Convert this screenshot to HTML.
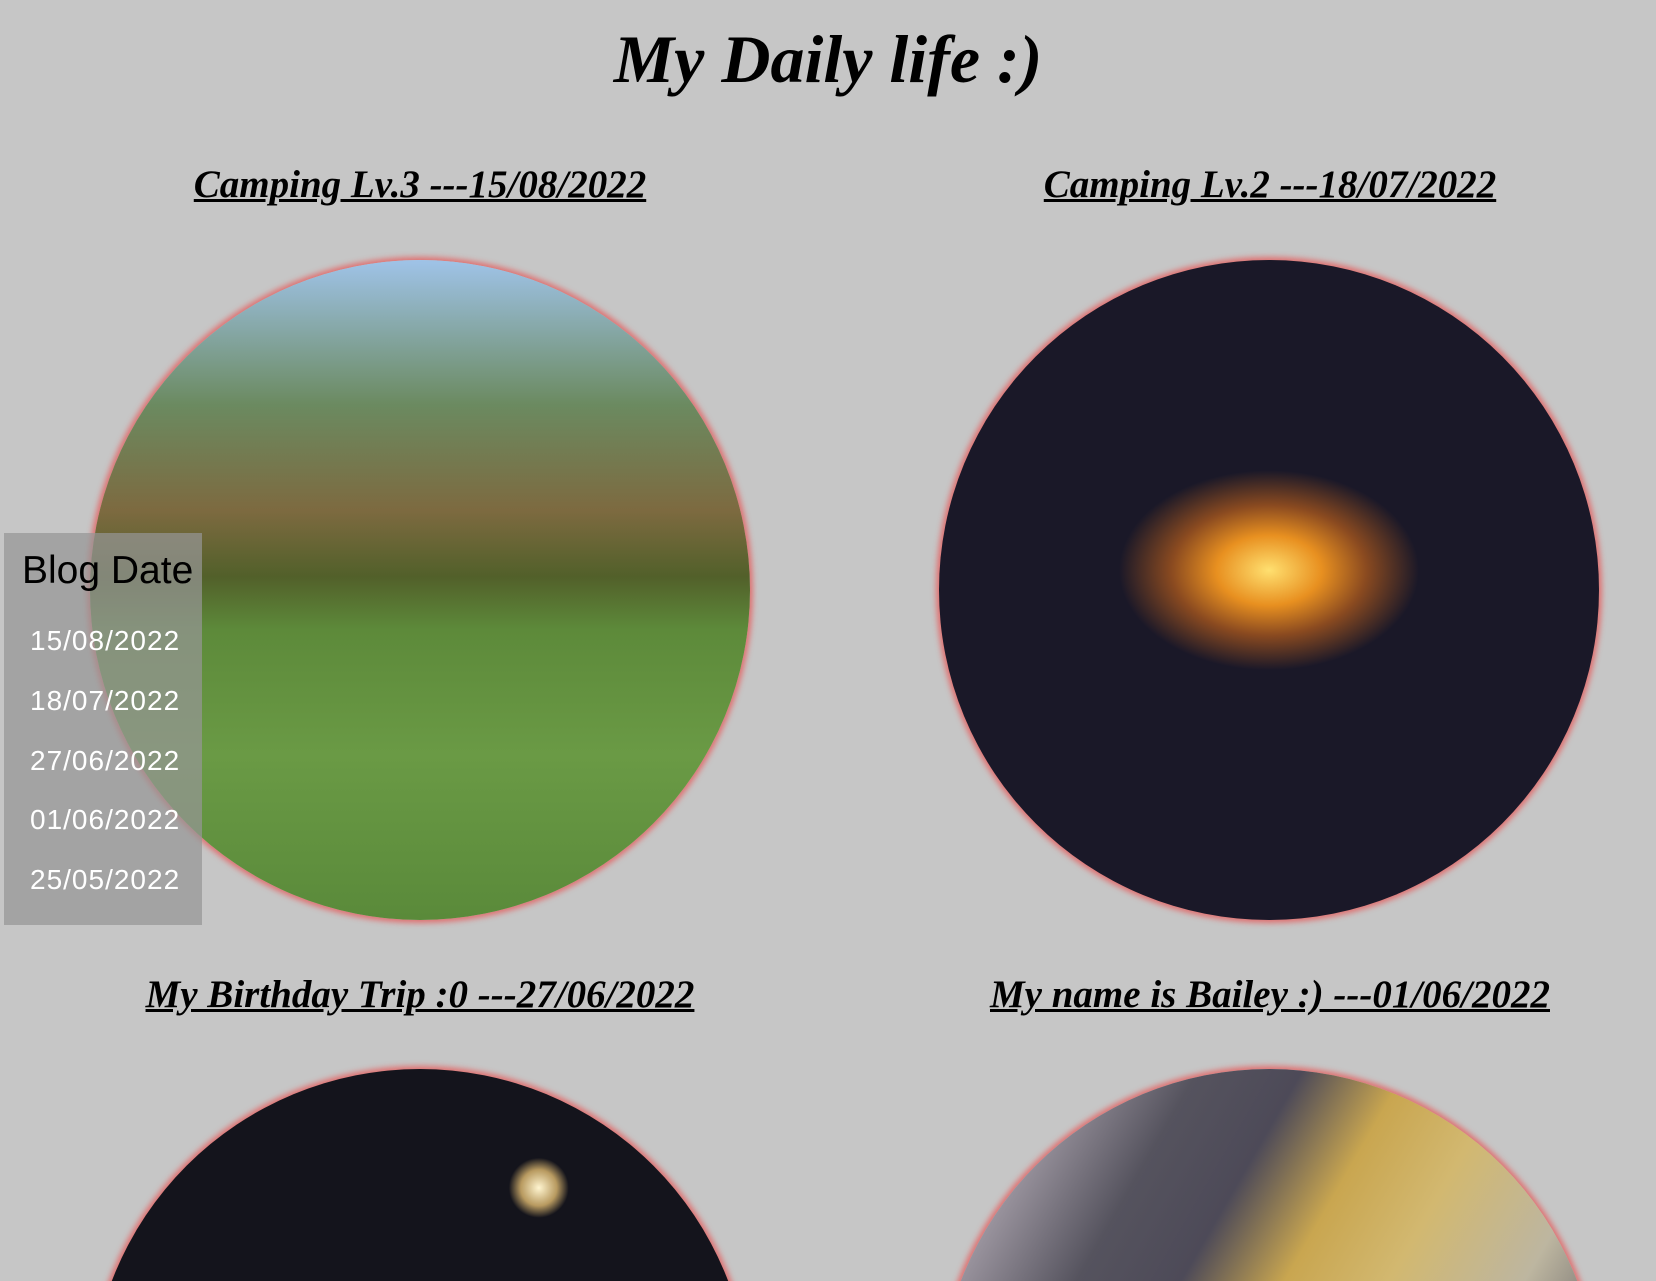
<!DOCTYPE html>
<html><head><meta charset="utf-8"><style>
html,body{margin:0;padding:0;width:1656px;height:1281px;overflow:hidden;}
body{background:#c6c6c6;font-family:"Liberation Serif",serif;}
#w{position:relative;width:1656px;height:1281px;overflow:hidden;background:#c6c6c6;}
h1{position:absolute;top:14px;left:0;width:1656px;margin:0;text-align:center;font-size:68px;font-style:italic;font-weight:bold;color:#000;line-height:90px;}
.h{position:absolute;width:828px;text-align:center;font-size:39px;font-style:italic;font-weight:bold;text-decoration:underline;line-height:46px;margin:0;}
.c{position:absolute;width:660px;height:660px;border-radius:50%;box-shadow:0 0 6px 3px #e07070;}
.side{position:absolute;left:4px;top:533px;width:198px;height:392px;background:rgba(150,150,150,0.72);}
.side .t{position:absolute;left:18px;top:16px;font-family:"Liberation Sans",sans-serif;font-size:39px;color:#000;}
.side .d{position:absolute;left:26px;font-family:"Liberation Sans",sans-serif;font-size:28px;color:#fff;letter-spacing:1px;}
</style></head><body><div id="w">
<h1>My Daily life :)</h1>
<div class="h" style="left:6px;top:162px">Camping Lv.3 ---15/08/2022</div>
<div class="h" style="left:856px;top:162px">Camping Lv.2 ---18/07/2022</div>
<div class="c" style="left:90px;top:260px;background:
linear-gradient(180deg,#9fc3e8 0%,#6b8a60 22%,#7d6a40 38%,#52602a 48%,#5d8a3a 56%,#6a9a45 75%,#5a8a3a 100%);"></div>
<div class="c" style="left:939px;top:260px;background:radial-gradient(ellipse 150px 100px at 50% 47%,#ffe070 0%,#e89020 35%,#8a4a20 65%,#1a1828 100%),#14131f;"></div>
<div class="side">
<div class="t">Blog Date</div>
<div class="d" style="top:92px">15/08/2022</div>
<div class="d" style="top:152px">18/07/2022</div>
<div class="d" style="top:212px">27/06/2022</div>
<div class="d" style="top:271px">01/06/2022</div>
<div class="d" style="top:331px">25/05/2022</div>
</div>
<div class="h" style="left:6px;top:972px">My Birthday Trip :0 ---27/06/2022</div>
<div class="h" style="left:856px;top:972px">My name is Bailey :) ---01/06/2022</div>
<div class="c" style="left:90px;top:1069px;background:radial-gradient(circle 30px at 68% 18%,#fff5d0 0%,#b89a60 60%,transparent 100%),#14141c;"></div>
<div class="c" style="left:939px;top:1069px;background:linear-gradient(120deg,#e8dde6 0%,#55535e 25%,#4d4a58 35%,#c9a650 45%,#d2b870 55%,#bdb6a0 68%,#3e3c4c 85%,#e0dce2 100%);"></div>
</div></body></html>
